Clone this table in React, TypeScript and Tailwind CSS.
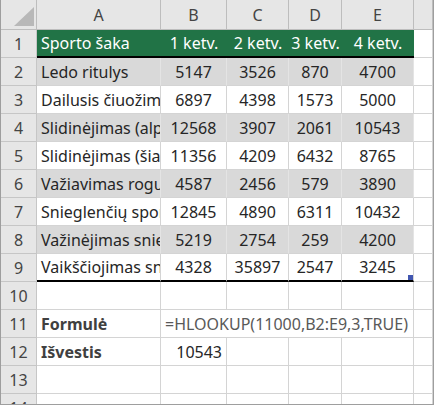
const rows: [string, number, number, number, number][] = [
  ["Ledo ritulys", 5147, 3526, 870, 4700],
  ["Dailusis čiuožimas", 6897, 4398, 1573, 5000],
  ["Slidinėjimas (alpinistinis)", 12568, 3907, 2061, 10543],
  ["Slidinėjimas (šiaurietiškas)", 11356, 4209, 6432, 8765],
  ["Važiavimas rogutėmis", 4587, 2456, 579, 3890],
  ["Snieglenčių sportas", 12845, 4890, 6311, 10432],
  ["Važinėjimas sniegu", 5219, 2754, 259, 4200],
  ["Vaikščiojimas sniegu", 4328, 35897, 2547, 3245],
];

const rowHead = "h-[28px] flex items-center justify-center bg-[#e6e6e6] border-r border-b border-[#c6c6c6] text-[#444]";
const cell = "h-[28px] border-r border-b border-[#d4d4d4] flex items-center overflow-hidden whitespace-nowrap";

export default function App() {
  return (
    <div className="w-[434px] h-[405px] overflow-hidden bg-white border-l border-r border-b border-[#9e9e9e] font-['Noto_Sans',sans-serif] text-[16px] text-[#262626]">
      <div className="grid grid-cols-[36px_124px_66px_62px_53px_72px_1fr]">
        {/* column letters */}
        <div className="h-[30px] bg-[#e6e6e6] border-r border-b border-[#bdbdbd] relative">
          <svg className="absolute left-0 top-0" width="36" height="30">
            <polygon points="13,26 33,26 33,7" fill="#b8b8b8" />
          </svg>
        </div>
        {["A", "B", "C", "D", "E", ""].map((l, i) => (
          <div key={i} className="h-[30px] bg-[#e6e6e6] border-r border-b border-[#bdbdbd] flex items-center justify-center text-[#444]">
            {l}
          </div>
        ))}

        {/* row 1 */}
        <div className={rowHead}>1</div>
        <div className="h-[28px] bg-[#217346] text-white border-b-2 border-black flex items-center pl-1">Sporto šaka</div>
        {["1 ketv.", "2 ketv.", "3 ketv.", "4 ketv."].map((t) => (
          <div key={t} className="h-[28px] bg-[#217346] text-white border-b-2 border-black flex items-center justify-center whitespace-nowrap">
            {t}
          </div>
        ))}
        <div className={cell}></div>

        {rows.map((r, i) => {
          const gray = i % 2 === 0;
          const last = i === rows.length - 1;
          const c = `${cell} ${gray ? "bg-[#d9d9d9] border-r-[#e4e4e4]" : ""} ${last ? "border-b-2 border-b-black" : ""}`;
          return [
            <div key={`h${i}`} className={rowHead}>{i + 2}</div>,
            <div key={`a${i}`} className={`${c} pl-1`}>{r[0]}</div>,
            ...r.slice(1).map((v, j) => (
              <div key={`v${i}${j}`} className={`${c} justify-center ${last && j === 3 ? "relative" : ""}`}>
                {v}
                {last && j === 3 && <span className="absolute right-0 bottom-0 w-[5px] h-[5px] bg-[#4156b0]" />}
              </div>
            )),
            <div key={`f${i}`} className={cell}></div>,
          ];
        })}

        {/* row 10 */}
        <div className={rowHead}>10</div>
        {[0, 1, 2, 3, 4, 5].map((k) => <div key={`r10${k}`} className={cell}></div>)}

        {/* row 11 */}
        <div className={rowHead}>11</div>
        <div className={`${cell} pl-1 font-bold text-[#404040]`}>Formulė</div>
        <div className={`${cell} col-span-4 pl-1 text-[#595959] overflow-visible`}>=HLOOKUP(11000,B2:E9,3,TRUE)</div>
        <div className={cell}></div>

        {/* row 12 */}
        <div className={rowHead}>12</div>
        <div className={`${cell} pl-1 font-bold text-[#404040]`}>Išvestis</div>
        <div className={`${cell} justify-end pr-1`}>10543</div>
        {[0, 1, 2, 3].map((k) => <div key={`r12${k}`} className={cell}></div>)}

        {/* row 13 */}
        <div className={rowHead}>13</div>
        {[0, 1, 2, 3, 4, 5].map((k) => <div key={`r13${k}`} className={cell}></div>)}

        {/* row 14 */}
        <div className={rowHead}>14</div>
        {[0, 1, 2, 3, 4, 5].map((k) => <div key={`r14${k}`} className={cell}></div>)}
      </div>
    </div>
  );
}
